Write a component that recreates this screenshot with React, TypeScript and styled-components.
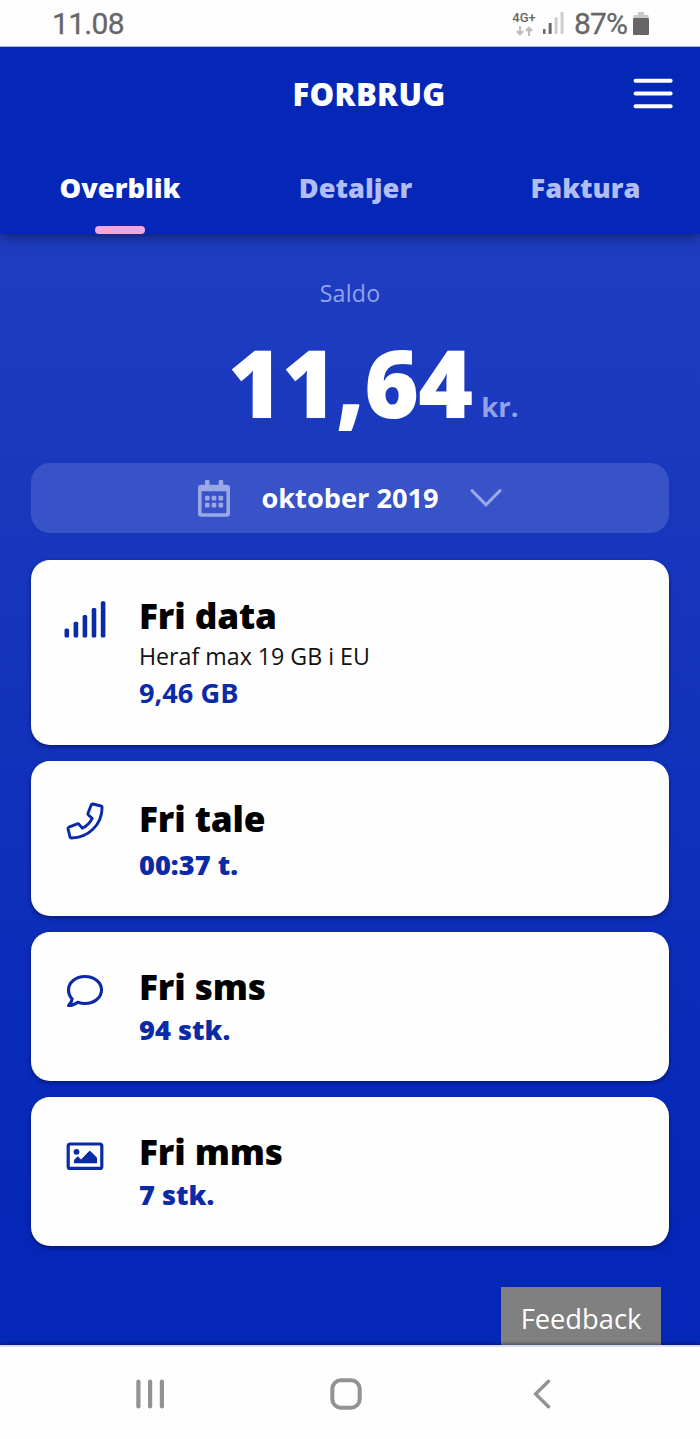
import React from "react";
import styled, { createGlobalStyle } from "styled-components";

const GlobalStyle = createGlobalStyle`
  * { box-sizing: border-box; }
  body { margin: 0; background: #fefefe; font-family: "Open Sans", "Noto Sans", sans-serif; }
  svg { display: block; flex: none; }
`;

const Screen = styled.div`
  width: 700px;
  height: 1439px;
  display: flex;
  flex-direction: column;
  overflow: hidden;
`;

const StatusBar = styled.div`
  height: 47px;
  flex: none;
  position: relative;
  z-index: 2;
  padding: 0 51px 0 52px;
  display: flex;
  align-items: center;
  justify-content: space-between;
  background: #fefefe;
  border-bottom: 1px solid #a9b6e8;
  color: #666;
  font: 400 30px/47px Roboto, sans-serif;
`;

const Clock = styled.span`
  letter-spacing: -0.7px;
  -webkit-text-stroke: 0.3px currentColor;
`;

const BatteryLevel = styled.span`
  margin: 0 6px 0 10px;
  letter-spacing: -0.9px;
  -webkit-text-stroke: 0.3px currentColor;
`;

const StatusIcons = styled.div`
  display: flex;
  align-items: center;
`;

const Network = styled.div`
  width: 26px;
  margin-right: 6px;
  padding-top: 2px;
  display: flex;
  flex-direction: column;
  align-items: center;
  gap: 2px;
  font: 500 13px/12px Roboto, sans-serif;
`;

const Header = styled.header`
  height: 187px;
  flex: none;
  position: relative;
  z-index: 1;
  background: #0427b7;
  box-shadow: 0 3px 12px rgba(10, 15, 60, 0.65);
`;

const TitleRow = styled.div`
  height: 93px;
  padding: 0 27px 0 105px;
  display: grid;
  grid-template-columns: 1fr auto;
  align-items: center;
`;

const Title = styled.h1`
  margin: 0;
  text-align: center;
  color: #fff;
  font-size: 31px;
  font-weight: 800;
  line-height: 42px;
  letter-spacing: 0.35px;
`;

const Tabs = styled.nav`
  height: 94px;
  display: grid;
  grid-template-columns: 240px 231px 229px;
`;

const Tab = styled.div<{ $active?: boolean }>`
  display: flex;
  flex-direction: column;
  align-items: center;
  justify-content: space-between;
  padding-top: 29px;
  color: ${(p) => (p.$active ? "#fff" : "#b1bdf3")};
  font-size: 27.2px;
  font-weight: 800;
  line-height: 38px;
`;

const Indicator = styled.div`
  width: 50px;
  height: 8px;
  border-radius: 4px;
  background: #f4a6db;
`;

const Content = styled.main`
  flex: 1;
  display: flex;
  flex-direction: column;
  padding: 0 31px;
  background: linear-gradient(#1f3dc1 0%, #1a39be 18%, #0427b7 90%);
`;

const BalanceLabel = styled.div`
  margin-top: 42px;
  text-align: center;
  color: #93a3ea;
  font-size: 23.2px;
  font-weight: 520;
  line-height: 34px;
  letter-spacing: 0.2px;
`;

const Balance = styled.div`
  display: flex;
  align-items: baseline;
  padding-left: 197px;
  height: 153px;
  line-height: 143px;
`;

const Amount = styled.span`
  color: #fff;
  font-size: 93.6px;
  font-weight: 800;
  letter-spacing: -0.8px;
`;

const Currency = styled.span`
  margin-left: 9px;
  color: #93a3ea;
  font-size: 27.4px;
  font-weight: 680;
  line-height: 40px;
  transform: translateY(-1px);
`;

const MonthPicker = styled.button`
  height: 70px;
  flex: none;
  padding: 0 167px;
  border: 0;
  border-radius: 19px;
  display: flex;
  align-items: center;
  justify-content: space-between;
  background: #3852c8;
  color: #fff;
  font: 700 27.2px/36px "Open Sans", "Noto Sans", sans-serif;
`;

const Cards = styled.div`
  margin-top: 27px;
  display: flex;
  flex-direction: column;
  gap: 16px;
`;

const Card = styled.section<{ $height: number; $top: number }>`
  height: ${(p) => p.$height}px;
  padding-top: ${(p) => p.$top}px;
  border-radius: 19px;
  background: #fefefe;
  box-shadow: 0 2px 4px rgba(5, 12, 70, 0.6);
  display: grid;
  grid-template-columns: 108px 1fr;
  align-items: start;
`;

const CardIcon = styled.div<{ $offset: number }>`
  display: flex;
  justify-content: center;
  padding-top: ${(p) => p.$offset}px;
  color: #0a2aa8;
`;

const CardTitle = styled.h2`
  margin: 0;
  color: #000;
  font-size: 35.2px;
  font-weight: 800;
  line-height: 48px;
  letter-spacing: -0.1px;
`;

const CardNote = styled.div`
  margin-top: 1px;
  color: #111;
  font-size: 23.2px;
  line-height: 32px;
`;

const CardValue = styled.div<{ $gap: number; $weight?: number }>`
  margin-top: ${(p) => p.$gap}px;
  color: #0a2aa8;
  font-size: 27.2px;
  font-weight: ${(p) => p.$weight ?? 800};
  line-height: 36px;
`;

const Feedback = styled.div`
  width: 160px;
  height: 58px;
  margin: auto 8px 0 auto;
  background: #808080;
  color: #fff;
  text-align: center;
  font-size: 27.3px;
  line-height: 64px;
`;

const NavBar = styled.footer`
  height: 94px;
  flex: none;
  padding: 2px 149px 0 136px;
  display: grid;
  grid-template-columns: 194px 1fr auto;
  align-items: center;
  background: #fefefe;
  border-top: 2px solid #d9def3;
  position: relative;
  box-shadow: 0 -1px 3px rgba(0, 0, 50, 0.5);
`;

const SignalIcon = () => (
  <svg width="42" height="37" viewBox="0 0 42 37" fill="currentColor">
    <rect x="0.5" y="27.5" width="4.6" height="9" rx="1.5" />
    <rect x="9.6" y="20.7" width="4.6" height="15.8" rx="1.5" />
    <rect x="18.6" y="14" width="4.6" height="22.5" rx="1.5" />
    <rect x="27.7" y="7" width="4.6" height="29.5" rx="1.5" />
    <rect x="36.8" y="0.3" width="4.6" height="36.2" rx="1.5" />
  </svg>
);

const PhoneIcon = () => (
  <svg width="38" height="38" viewBox="0 0 38 38" fill="none" stroke="currentColor" strokeWidth="2.9" strokeLinejoin="round">
    <path d="M26.8 2 L35 4 Q36.2 4.3 36.1 5.5 C36 22.5 22.5 35.8 5.5 36 Q4.3 36 4 35 L2 26.8 Q1.8 25.7 2.9 25.2 L11.3 21.8 Q12.4 21.4 13.1 22.3 L16.3 26.2 C20.7 24 24 20.8 26.2 16.3 L22.4 13 Q21.5 12.2 22 11.2 L25.2 2.9 Q25.7 1.8 26.8 2 Z" />
  </svg>
);

const BubbleIcon = () => (
  <svg width="38" height="34" viewBox="0 0 38 34" fill="none" stroke="currentColor" strokeWidth="3.1" strokeLinejoin="round">
    <path d="M19 2.5 C28.5 2.5 35.5 8.6 35.5 16 C35.5 23.4 28.5 29.5 19 29.5 C16.4 29.5 14 29 11.8 28.2 C9.2 30.2 6 31.5 2.5 31.5 C4.3 29.7 5.9 27.5 6.2 25 C3.9 22.6 2.5 19.5 2.5 16 C2.5 8.6 9.5 2.5 19 2.5 Z" />
  </svg>
);

const PictureIcon = () => (
  <svg width="38" height="28" viewBox="0 0 38 28">
    <rect x="2.2" y="2" width="33.6" height="24.4" rx="2" fill="none" stroke="currentColor" strokeWidth="3.2" />
    <circle cx="10.5" cy="9.8" r="2.9" fill="currentColor" />
    <path d="M8 21.2 V18 L11.2 14.8 Q11.8 14.3 12.4 14.8 L15 17.4 L23 9.3 Q23.8 8.6 24.6 9.3 L31 15.8 V21.2 Z" fill="currentColor" />
  </svg>
);

const CalendarIcon = () => (
  <svg width="32" height="37" viewBox="0 0 32 37" fill="#9aa9e6">
    <path
      fillRule="evenodd"
      d="M7 1.2 Q7 0 8.2 0 H10.3 Q11.5 0 11.5 1.2 V4.7 H20.7 V1.2 Q20.7 0 21.9 0 H24 Q25.2 0 25.2 1.2 V4.7 H28.6 Q32 4.7 32 8 V33.5 Q32 36.8 28.6 36.8 H3.4 Q0 36.8 0 33.5 V8 Q0 4.7 3.4 4.7 H7 Z M3.6 11.3 V32.4 Q3.6 33.3 4.4 33.3 H27.6 Q28.4 33.3 28.4 32.4 V11.3 Z"
    />
    {[7, 13.7, 20.5].map((x) => [15.8, 22.8].map((y) => <rect key={`${x}-${y}`} x={x} y={y} width="4.6" height="4.6" rx="1" />))}
  </svg>
);

const ChevronIcon = () => (
  <svg width="32" height="20" viewBox="0 0 32 20" fill="none" stroke="#9aa9e6" strokeWidth="3" strokeLinecap="round">
    <path d="M2 2.6 L16 16.8 L30 2.6" />
  </svg>
);

const MenuIcon = () => (
  <svg width="40" height="32" viewBox="0 0 40 32" fill="#fff">
    <rect x="0.6" y="0.8" width="39" height="4" rx="1.8" />
    <rect x="0.6" y="13.6" width="39" height="4" rx="1.8" />
    <rect x="0.6" y="26.2" width="39" height="4" rx="1.8" />
  </svg>
);

const TransferIcon = () => (
  <svg width="17" height="10" viewBox="0 0 17 10" fill="none" stroke="#bdbdbd" strokeWidth="2.1">
    <path d="M4 0 V8 M0.9 5 L4 8.2 L7.1 5 M13 10 V2 M9.9 5 L13 1.8 L16.1 5" />
  </svg>
);

const ReceptionIcon = () => (
  <svg width="21" height="22" viewBox="0 0 21 22">
    <rect x="0" y="17" width="2.5" height="5" rx="0.5" fill="#666" />
    <rect x="5.7" y="11" width="2.9" height="11" rx="0.5" fill="#666" />
    <rect x="11.7" y="5.3" width="2.9" height="16.7" rx="0.5" fill="#ccc" />
    <rect x="17.6" y="0" width="2.9" height="22" rx="0.5" fill="#ccc" />
  </svg>
);

const BatteryIcon = () => (
  <svg width="16" height="23" viewBox="0 0 16 23">
    <path d="M5 0 H11 V3 H15.5 V6 H0.5 V3 H5 Z" fill="#c8c8c8" />
    <rect x="0" y="6" width="16" height="17" rx="1" fill="#666" />
  </svg>
);

const RecentsIcon = () => (
  <svg width="29" height="30" viewBox="0 0 29 30" fill="#929292">
    <rect x="0.3" y="0.5" width="4.2" height="29" rx="2" />
    <rect x="12" y="0.5" width="4.2" height="29" rx="2" />
    <rect x="23.8" y="0.5" width="4.2" height="29" rx="2" />
  </svg>
);

const HomeIcon = () => (
  <svg width="32" height="32" viewBox="0 0 32 32" fill="none" stroke="#929292" strokeWidth="4">
    <rect x="2.3" y="2.3" width="27.4" height="27.4" rx="8.5" />
  </svg>
);

const BackIcon = () => (
  <svg width="18" height="30" viewBox="0 0 18 30" fill="none" stroke="#929292" strokeWidth="3.4" strokeLinecap="round">
    <path d="M15.5 2.3 L2.6 15 L15.5 27.7" />
  </svg>
);

const cards = [
  { title: "Fri data", note: "Heraf max 19 GB i EU", value: "9,46 GB", icon: SignalIcon, height: 184.5, top: 31, iconTop: 10, gap: 3, weight: 700 },
  { title: "Fri tale", value: "00:37 t.", icon: PhoneIcon, height: 155, top: 33, iconTop: 8, gap: 5 },
  { title: "Fri sms", value: "94 stk.", icon: BubbleIcon, height: 149, top: 30, iconTop: 12, gap: 2 },
  { title: "Fri mms", value: "7 stk.", icon: PictureIcon, height: 149.5, top: 30, iconTop: 15, gap: 2 },
];

export default function App() {
  return (
    <Screen>
      <GlobalStyle />
      <StatusBar>
        <Clock>11.08</Clock>
        <StatusIcons>
          <Network>
            4G+
            <TransferIcon />
          </Network>
          <ReceptionIcon />
          <BatteryLevel>87%</BatteryLevel>
          <BatteryIcon />
        </StatusIcons>
      </StatusBar>
      <Header>
        <TitleRow>
          <Title>FORBRUG</Title>
          <MenuIcon />
        </TitleRow>
        <Tabs>
          <Tab $active>
            Overblik
            <Indicator />
          </Tab>
          <Tab>Detaljer</Tab>
          <Tab>Faktura</Tab>
        </Tabs>
      </Header>
      <Content>
        <BalanceLabel>Saldo</BalanceLabel>
        <Balance>
          <Amount>11,64</Amount>
          <Currency>kr.</Currency>
        </Balance>
        <MonthPicker>
          <CalendarIcon />
          oktober 2019
          <ChevronIcon />
        </MonthPicker>
        <Cards>
          {cards.map(({ title, note, value, icon: Icon, height, top, iconTop, gap, weight }) => (
            <Card key={title} $height={height} $top={top}>
              <CardIcon $offset={iconTop}>
                <Icon />
              </CardIcon>
              <div>
                <CardTitle>{title}</CardTitle>
                {note && <CardNote>{note}</CardNote>}
                <CardValue $gap={gap} $weight={weight}>{value}</CardValue>
              </div>
            </Card>
          ))}
        </Cards>
        <Feedback>Feedback</Feedback>
      </Content>
      <NavBar>
        <RecentsIcon />
        <HomeIcon />
        <BackIcon />
      </NavBar>
    </Screen>
  );
}
